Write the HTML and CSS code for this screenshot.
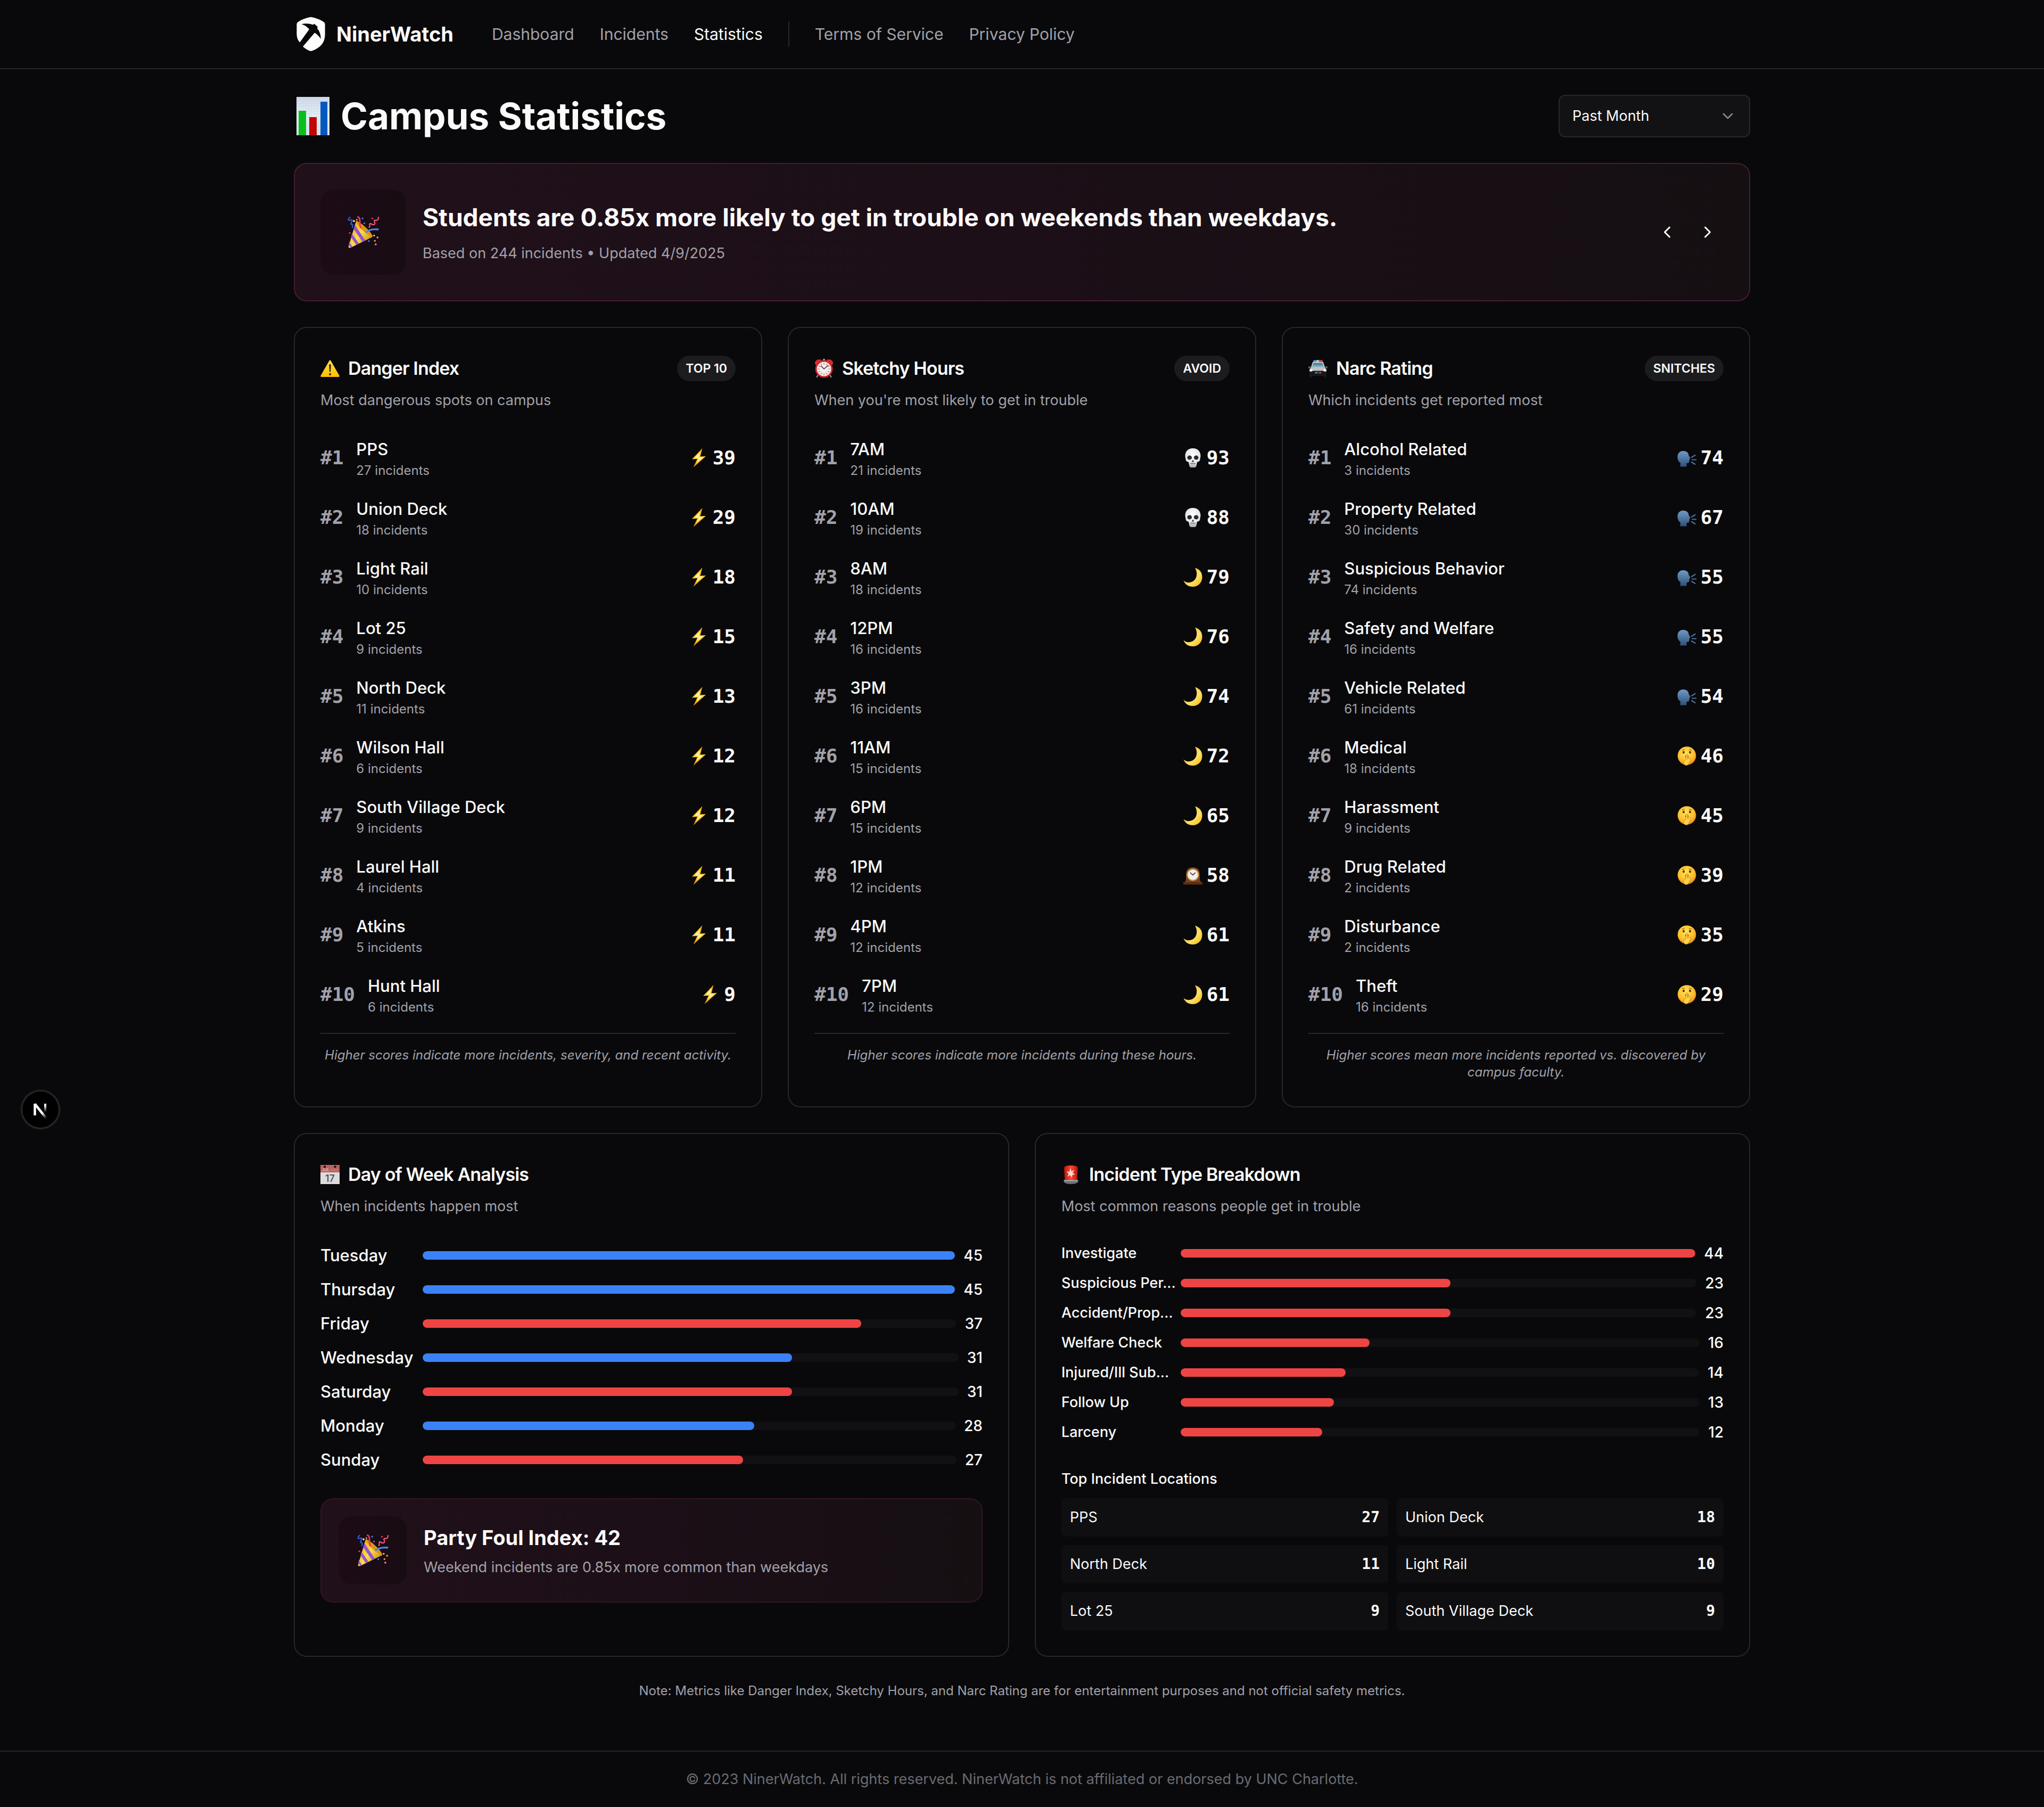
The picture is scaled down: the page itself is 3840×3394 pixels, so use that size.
FILE: index.html
```html
<!DOCTYPE html>
<html lang="en">
<head>
<meta charset="utf-8">
<meta name="viewport" content="width=device-width, initial-scale=1">
<title>Campus Statistics | NinerWatch</title>
<link rel="stylesheet" href="styles.css">
</head>
<body>
<svg class="sprite" aria-hidden="true">
  <defs>
    <linearGradient id="g-bolt" x1="0" y1="0" x2="0" y2="1"><stop offset="0" stop-color="#f7a400"/><stop offset=".5" stop-color="#ffd21f"/><stop offset="1" stop-color="#f08c00"/></linearGradient>
    <linearGradient id="g-warn" x1="0" y1="0" x2="0" y2="1"><stop offset="0" stop-color="#ffe04a"/><stop offset="1" stop-color="#fcc000"/></linearGradient>
    <linearGradient id="g-cone" x1="0" y1="0" x2="1" y2=".7"><stop offset="0" stop-color="#d99a1c"/><stop offset=".55" stop-color="#fbe04a"/><stop offset="1" stop-color="#c98a12"/></linearGradient>
    <linearGradient id="g-moon" x1="0" y1="0" x2="1" y2="1"><stop offset="0" stop-color="#f3b61f"/><stop offset=".6" stop-color="#ffe067"/><stop offset="1" stop-color="#f2b705"/></linearGradient>
    <linearGradient id="g-talk" x1="0" y1="0" x2="0" y2="1"><stop offset="0" stop-color="#6f9ac6"/><stop offset="1" stop-color="#2f5079"/></linearGradient>
    <radialGradient id="g-face" cx=".45" cy=".35" r=".65"><stop offset="0" stop-color="#ffe65c"/><stop offset=".7" stop-color="#fdbb2a"/><stop offset="1" stop-color="#e88a12"/></radialGradient>
    <radialGradient id="g-skull" cx=".5" cy=".35" r=".7"><stop offset="0" stop-color="#ffffff"/><stop offset=".7" stop-color="#dfe3e6"/><stop offset="1" stop-color="#9ba1a6"/></radialGradient>
    <linearGradient id="g-siren" x1="0" y1="0" x2="1" y2="0"><stop offset="0" stop-color="#b3170c"/><stop offset=".5" stop-color="#ff4b34"/><stop offset="1" stop-color="#a8140a"/></linearGradient>
    <linearGradient id="g-glass" x1="0" y1="0" x2="0" y2="1"><stop offset="0" stop-color="#3f6f85"/><stop offset="1" stop-color="#9fd3e0"/></linearGradient>
    <linearGradient id="g-paper" x1="0" y1="0" x2="0" y2="1"><stop offset="0" stop-color="#d5dbe4"/><stop offset=".5" stop-color="#f4f7fa"/><stop offset="1" stop-color="#dfe5ec"/></linearGradient>
    <linearGradient id="g-next" x1="0" y1="0" x2="0" y2="1"><stop offset=".2" stop-color="#fff"/><stop offset="1" stop-color="#fff" stop-opacity="0"/></linearGradient>
    <linearGradient id="g-next-leg" gradientUnits="userSpaceOnUse" x1="20" y1="22" x2="31" y2="36"><stop offset=".3" stop-color="#fff"/><stop offset="1" stop-color="#fff" stop-opacity="0"/></linearGradient>
    <pattern id="p-grid" width="3" height="3" patternUnits="userSpaceOnUse"><path d="M0 0H3M0 0V3" stroke="#b8cfe6" stroke-width="1"/></pattern>
  </defs>

  <symbol id="i-chart" viewBox="0 0 72 72">
    <rect x="5" width="62" height="72" fill="url(#g-paper)"/>
    <rect x="5" width="62" height="72" fill="url(#p-grid)"/>
    <rect x="9" y="26" width="14" height="46" fill="#08c01c"/>
    <rect x="29" y="38" width="14" height="34" fill="#c00606"/>
    <rect x="50" y="9" width="13" height="63" fill="#0459c0"/>
  </symbol>
  <symbol id="i-party" viewBox="0 0 36 36">
    <path d="M10.3 5.2C14 6 27.500 17 29 23.200L4 35.500C2.500 36.200 1.400 35.500 1.700 34Z" fill="url(#g-cone)"/>
    <path d="M10.300 5.200C15 6.500 28 18.500 28.900 23.300C24.500 23.400 9.500 9.500 10.300 5.200Z" fill="#e0930f"/>
    <path d="M7.600 14.500L17.200 28.800L20.500 27.200L8.700 9.700ZM4.500 23.500L10.200 32.200L13.300 30.700L5.500 19.500ZM1.900 31.800L4 35.500L6 34.500L2.500 28.600Z" fill="#9a52d0"/>
    <path d="M3.600 .8C.2 4.500 1 5.500 5 4C7.500 4.500 3.500 7.500 4.500 9.200C7.800 8.500 5.500 12 6 13.500" fill="none" stroke="#2f62d9" stroke-width="1.300"/>
    <path d="M11.500 .8C16 1 13.500 8 15.500 13.500" fill="none" stroke="#f0335c" stroke-width="1.700"/>
    <path d="M35.200 .8C35.800 3.500 34 5.500 31.200 4.500C29.500 6 33 8 30.500 9.500C28 10.500 27 7.500 25.800 8.500C24.500 9.500 27 11.500 24.500 13" fill="none" stroke="#f2587b" stroke-width="1.300"/>
    <path d="M20.800 18.500C25 14.800 30 14.300 35.500 15" fill="none" stroke="#4c86f5" stroke-width="2"/>
    <circle cx="7.800" cy="5.500" r="1.100" fill="#ffe14a"/><circle cx="17.500" cy="2.500" r="1" fill="#3c7af0"/><circle cx="19.500" cy="8" r="1" fill="#3c7af0"/><circle cx="28.500" cy="2.500" r="1" fill="#f0335c"/><circle cx="11" cy="4" r=".9" fill="#ff9cb4"/><circle cx="3" cy="19" r="1" fill="#f0335c"/><circle cx="30.500" cy="21.800" r="1" fill="#ffd23a"/><circle cx="34.300" cy="24" r="1.100" fill="#f7a32a"/><circle cx="24.500" cy="28" r="1" fill="#3c7af0"/><circle cx="31.400" cy="27.800" r="1" fill="#f7a32a"/><circle cx="32.300" cy="31.800" r="1.100" fill="#ff86b8"/>
  </symbol>
  <symbol id="i-warning" viewBox="0 0 36 36">
    <path d="M16.600 3.500Q18 1.300 19.400 3.500L35.500 31.500Q36.500 34 34 34H2Q-.5 34 .5 31.500Z" fill="url(#g-warn)"/>
    <path d="M16.200 11Q18 9 19.800 11L19 24.500H17Z" fill="#2b2200"/><circle cx="18" cy="29" r="2" fill="#2b2200"/>
  </symbol>
  <symbol id="i-alarm" viewBox="0 0 36 36">
    <path d="M7 30L4 35M29 30L32 35" stroke="#8c8f94" stroke-width="2.400"/>
    <path d="M1 9Q1 1 10 1L14 3L3 12ZM35 9Q35 1 26 1L22 3L33 12Z" fill="#d92a31"/>
    <rect x="16" y="0" width="4" height="3" rx="1" fill="#9a9da2"/>
    <circle cx="18" cy="19" r="16.500" fill="#c9252c"/><circle cx="18" cy="19" r="13.500" fill="#f1efec"/>
    <g stroke="#e0555a" stroke-width="1.200"><path d="M18 7V11M18 27V31M6 19H10M26 19H30M12 8.600L14 12M24 8.600L22 12M12 29.400L14 26M24 29.400L22 26M7.600 13L11 15M28.400 13L25 15M7.600 25L11 23M28.400 25L25 23"/></g>
    <path d="M12 13L18 19L26 12" fill="none" stroke="#333" stroke-width="1.600"/>
  </symbol>
  <symbol id="i-police" viewBox="0 0 36 36">
    <path d="M9 4Q9 2.500 11 2.500H25Q27 2.500 27 4V6H9Z" fill="#25b5ef"/><path d="M18 2.500H25Q27 2.500 27 4V6H18Z" fill="#ef3b3b"/><rect x="15.500" y="2.500" width="4" height="3.500" fill="#e9c9dc"/>
    <path d="M8 6H28L31.500 17L34 20V30H2V20L4.500 17Z" fill="#bfc3c6"/>
    <path d="M9.500 8H26.500L29.500 17H6.500Z" fill="url(#g-glass)"/>
    <rect x="0" y="14" width="4.500" height="4" rx="1.500" fill="#5b5f63"/><rect x="31.500" y="14" width="4.500" height="4" rx="1.500" fill="#5b5f63"/>
    <path d="M2 24L9 22.500H27L34 24V33Q34 34.500 32 34.500H29V32H7V34.500H4Q2 34.500 2 33Z" fill="#17191b"/>
    <circle cx="5.500" cy="21.500" r="2.200" fill="#fff"/><circle cx="30.500" cy="21.500" r="2.200" fill="#fff"/>
    <rect x="12" y="24" width="12" height="4" fill="#3b4045"/><rect x="13" y="25" width="3" height="2" fill="#29a8f0"/><rect x="21" y="25" width="3" height="2" fill="#ef3b3b"/>
  </symbol>
  <symbol id="i-bolt" viewBox="0 0 36 36">
    <path d="M24.500 0L5 20.500L15 20L7.500 36L31 15L20.500 15.500Z" fill="url(#g-bolt)"/><path d="M21 6L10 18.500L18 18L13 28L26 16.600L17.500 17Z" fill="#fff3b0"/>
  </symbol>
  <symbol id="i-skull" viewBox="0 0 36 36">
    <path d="M18 0C9 0 3.500 6 3.500 14C3.500 17 4.500 18.500 4.500 20.500C4.500 24 6.500 25 10 26L11.500 33Q12 36 15 36H21Q24 36 24.500 33L26 26C29.500 25 31.500 24 31.500 20.500C31.500 18.500 32.500 17 32.500 14C32.500 6 27 0 18 0Z" fill="url(#g-skull)"/>
    <ellipse cx="11.800" cy="17.500" rx="4.300" ry="4" fill="#2a2a2c"/><ellipse cx="24.200" cy="17.500" rx="4.300" ry="4" fill="#2a2a2c"/>
    <path d="M18 21.500L15.800 25.500H20.200Z" fill="#2a2a2c"/><path d="M13 28.500H23" stroke="#5a5d60" stroke-width="1.400"/><path d="M15 28V33.500M18 28V34M21 28V33.500" stroke="#8b8f93" stroke-width=".9"/>
  </symbol>
  <symbol id="i-moon" viewBox="0 0 36 36">
    <path d="M22 .5C31 3 36 10 35.500 19C35 29 27.500 36 18 36C9.500 36 3 31.500 .5 24.500C5 28.500 12 29.500 18 26C26 21.500 27.500 10 22 .5Z" fill="url(#g-moon)"/>
  </symbol>
  <symbol id="i-clock" viewBox="0 0 36 36">
    <path d="M3 35V30Q5 29 5 24V17Q5 3 18 3Q31 3 31 17V24Q31 29 33 30V35Z" fill="#7a3f22"/><path d="M0 31H36V35.500H0Z" fill="#5b2c17"/>
    <circle cx="18" cy="17" r="11.500" fill="#c99a55"/><circle cx="18" cy="17" r="9.500" fill="#f3efe6"/><path d="M13 13L18 17.500L23 13" fill="none" stroke="#2c2c2c" stroke-width="1.600"/>
  </symbol>
  <symbol id="i-talk" viewBox="0 0 36 36">
    <path d="M11 5C18 5 21.500 9 21.500 13.500L24.500 18.500Q25 20 23 20.300L22.500 25Q22 28.500 17.500 28V34.500H5.500L6 27.500C2 25 .5 20.500 .5 16C.5 9 5 5 11 5Z" fill="url(#g-talk)"/>
    <path d="M27 17L33.500 13M28 21.500H35.500M27 26L33.500 30" stroke="#4a719c" stroke-width="2.200" stroke-linecap="round"/>
  </symbol>
  <symbol id="i-hush" viewBox="0 0 36 36">
    <circle cx="18" cy="17.500" r="17.300" fill="url(#g-face)"/>
    <path d="M9 7.500Q11.500 5 14 7M22 7Q24.500 5 27 7.500" fill="none" stroke="#a3620c" stroke-width="1.300"/>
    <ellipse cx="12" cy="11" rx="1.900" ry="2.500" fill="#5a2f07"/><ellipse cx="24" cy="11" rx="1.900" ry="2.500" fill="#5a2f07"/>
    <ellipse cx="18" cy="19" rx="3.300" ry="2" fill="#8a4d0b"/>
    <path d="M16.500 15.500Q18 13.500 19.300 15.500L19.500 24L24 21.500Q26.500 22 25 25L21.500 33Q19 36.500 14.500 35Q11.500 33.500 12 29.500Q12.500 26 16.200 25Z" fill="#ffd34d" stroke="#d98a14" stroke-width="1"/>
  </symbol>
  <symbol id="i-siren" viewBox="0 0 36 36">
    <path d="M6.500 29L5 6Q5 1 18 1Q31 1 31 6L29.500 29Z" fill="url(#g-siren)"/>
    <path d="M5 28H31Q32.500 31 30 33.500Q26 36 18 36Q10 36 6 33.500Q3.500 31 5 28Z" fill="#6e7073"/><path d="M5.500 28.500H30.500V30.500H5.500Z" fill="#a9acaf"/>
    <path d="M17 6L19 12.500L24.500 9L21 15L26 18L20.500 18.500L19.500 24L16.500 19L11.500 22L13.500 16.500L9.500 12.500L15 13Z" fill="#ffd9d2"/>
  </symbol>
</svg>

<header class="site-header">
  <div class="container header-inner">
    <a class="brand" href="#">
      <svg class="brand-mark" viewBox="0 0 64 64" aria-hidden="true">
        <path d="M32 0C43 2 52 6 57 10Q58.600 11.500 58.600 14V32C58.600 44 54 51 48 56C42 60.500 37 63 32 64C27 63 22 60 17 55.500L5.400 40V14Q5.400 11.500 7 10C12 6 21 2 32 0Z" fill="#fdfdfb"/>
        <path d="M14.400 13.500C22 11.500 29 12.200 35.500 14.500L38.700 13L44.700 18.200L44 21.500C48 26 50.800 33 50.700 41C47.500 36 43.500 32.500 39.200 29.500L17 55.500L9 60L4 49L10.900 48L29 23C25.500 19 20.500 15 14.400 13.500Z" fill="#09090b"/>
        <path d="M5.400 32Q5.500 41 10.900 48L4 49Z" fill="#09090b"/>
      </svg>
      <span>NinerWatch</span>
    </a>
    <nav class="nav" aria-label="Main">
      <a href="#">Dashboard</a>
      <a href="#">Incidents</a>
      <a href="#" class="active" aria-current="page">Statistics</a>
      <span class="nav-divider"></span>
      <a href="#">Terms of Service</a>
      <a href="#">Privacy Policy</a>
    </nav>
  </div>
</header>

<main class="container main">
  <div class="page-head">
    <h1><svg class="h1-icon" aria-hidden="true"><use href="#i-chart"/></svg>Campus Statistics</h1>
    <div class="select">
      <select aria-label="Time range"><option>Past Month</option><option>Past Week</option><option>Past Year</option></select>
      <svg viewBox="0 0 24 24" aria-hidden="true"><path d="m6 9 6 6 6-6"/></svg>
    </div>
  </div>

  <section class="banner">
    <div class="banner-icon"><svg aria-hidden="true"><use href="#i-party"/></svg></div>
    <div class="banner-text">
      <h2>Students are 0.85x more likely to get in trouble on weekends than weekdays.</h2>
      <p>Based on 244 incidents • Updated 4/9/2025</p>
    </div>
    <div class="banner-nav">
      <button type="button" aria-label="Previous"><svg viewBox="0 0 24 24"><path d="m15 18-6-6 6-6"/></svg></button>
      <button type="button" aria-label="Next"><svg viewBox="0 0 24 24"><path d="m9 18 6-6-6-6"/></svg></button>
    </div>
  </section>

  <div class="grid-3">
    <section class="card">
      <header class="card-head">
        <div class="card-title-row"><h3><svg class="icon"><use href="#i-warning"/></svg>Danger Index</h3><span class="badge">TOP 10</span></div>
        <p>Most dangerous spots on campus</p>
      </header>
      <ol class="ranks">
        <li><span class="rank">#1</span><div class="item"><b>PPS</b><small>27 incidents</small></div><span class="score"><svg class="icon"><use href="#i-bolt"/></svg>39</span></li>
        <li><span class="rank">#2</span><div class="item"><b>Union Deck</b><small>18 incidents</small></div><span class="score"><svg class="icon"><use href="#i-bolt"/></svg>29</span></li>
        <li><span class="rank">#3</span><div class="item"><b>Light Rail</b><small>10 incidents</small></div><span class="score"><svg class="icon"><use href="#i-bolt"/></svg>18</span></li>
        <li><span class="rank">#4</span><div class="item"><b>Lot 25</b><small>9 incidents</small></div><span class="score"><svg class="icon"><use href="#i-bolt"/></svg>15</span></li>
        <li><span class="rank">#5</span><div class="item"><b>North Deck</b><small>11 incidents</small></div><span class="score"><svg class="icon"><use href="#i-bolt"/></svg>13</span></li>
        <li><span class="rank">#6</span><div class="item"><b>Wilson Hall</b><small>6 incidents</small></div><span class="score"><svg class="icon"><use href="#i-bolt"/></svg>12</span></li>
        <li><span class="rank">#7</span><div class="item"><b>South Village Deck</b><small>9 incidents</small></div><span class="score"><svg class="icon"><use href="#i-bolt"/></svg>12</span></li>
        <li><span class="rank">#8</span><div class="item"><b>Laurel Hall</b><small>4 incidents</small></div><span class="score"><svg class="icon"><use href="#i-bolt"/></svg>11</span></li>
        <li><span class="rank">#9</span><div class="item"><b>Atkins</b><small>5 incidents</small></div><span class="score"><svg class="icon"><use href="#i-bolt"/></svg>11</span></li>
        <li><span class="rank">#10</span><div class="item"><b>Hunt Hall</b><small>6 incidents</small></div><span class="score"><svg class="icon"><use href="#i-bolt"/></svg>9</span></li>
      </ol>
      <p class="card-note">Higher scores indicate more incidents, severity, and recent activity.</p>
    </section>

    <section class="card">
      <header class="card-head">
        <div class="card-title-row"><h3><svg class="icon"><use href="#i-alarm"/></svg>Sketchy Hours</h3><span class="badge">AVOID</span></div>
        <p>When you're most likely to get in trouble</p>
      </header>
      <ol class="ranks">
        <li><span class="rank">#1</span><div class="item"><b>7AM</b><small>21 incidents</small></div><span class="score"><svg class="icon"><use href="#i-skull"/></svg>93</span></li>
        <li><span class="rank">#2</span><div class="item"><b>10AM</b><small>19 incidents</small></div><span class="score"><svg class="icon"><use href="#i-skull"/></svg>88</span></li>
        <li><span class="rank">#3</span><div class="item"><b>8AM</b><small>18 incidents</small></div><span class="score"><svg class="icon"><use href="#i-moon"/></svg>79</span></li>
        <li><span class="rank">#4</span><div class="item"><b>12PM</b><small>16 incidents</small></div><span class="score"><svg class="icon"><use href="#i-moon"/></svg>76</span></li>
        <li><span class="rank">#5</span><div class="item"><b>3PM</b><small>16 incidents</small></div><span class="score"><svg class="icon"><use href="#i-moon"/></svg>74</span></li>
        <li><span class="rank">#6</span><div class="item"><b>11AM</b><small>15 incidents</small></div><span class="score"><svg class="icon"><use href="#i-moon"/></svg>72</span></li>
        <li><span class="rank">#7</span><div class="item"><b>6PM</b><small>15 incidents</small></div><span class="score"><svg class="icon"><use href="#i-moon"/></svg>65</span></li>
        <li><span class="rank">#8</span><div class="item"><b>1PM</b><small>12 incidents</small></div><span class="score"><svg class="icon"><use href="#i-clock"/></svg>58</span></li>
        <li><span class="rank">#9</span><div class="item"><b>4PM</b><small>12 incidents</small></div><span class="score"><svg class="icon"><use href="#i-moon"/></svg>61</span></li>
        <li><span class="rank">#10</span><div class="item"><b>7PM</b><small>12 incidents</small></div><span class="score"><svg class="icon"><use href="#i-moon"/></svg>61</span></li>
      </ol>
      <p class="card-note">Higher scores indicate more incidents during these hours.</p>
    </section>

    <section class="card">
      <header class="card-head">
        <div class="card-title-row"><h3><svg class="icon"><use href="#i-police"/></svg>Narc Rating</h3><span class="badge">SNITCHES</span></div>
        <p>Which incidents get reported most</p>
      </header>
      <ol class="ranks">
        <li><span class="rank">#1</span><div class="item"><b>Alcohol Related</b><small>3 incidents</small></div><span class="score"><svg class="icon"><use href="#i-talk"/></svg>74</span></li>
        <li><span class="rank">#2</span><div class="item"><b>Property Related</b><small>30 incidents</small></div><span class="score"><svg class="icon"><use href="#i-talk"/></svg>67</span></li>
        <li><span class="rank">#3</span><div class="item"><b>Suspicious Behavior</b><small>74 incidents</small></div><span class="score"><svg class="icon"><use href="#i-talk"/></svg>55</span></li>
        <li><span class="rank">#4</span><div class="item"><b>Safety and Welfare</b><small>16 incidents</small></div><span class="score"><svg class="icon"><use href="#i-talk"/></svg>55</span></li>
        <li><span class="rank">#5</span><div class="item"><b>Vehicle Related</b><small>61 incidents</small></div><span class="score"><svg class="icon"><use href="#i-talk"/></svg>54</span></li>
        <li><span class="rank">#6</span><div class="item"><b>Medical</b><small>18 incidents</small></div><span class="score"><svg class="icon"><use href="#i-hush"/></svg>46</span></li>
        <li><span class="rank">#7</span><div class="item"><b>Harassment</b><small>9 incidents</small></div><span class="score"><svg class="icon"><use href="#i-hush"/></svg>45</span></li>
        <li><span class="rank">#8</span><div class="item"><b>Drug Related</b><small>2 incidents</small></div><span class="score"><svg class="icon"><use href="#i-hush"/></svg>39</span></li>
        <li><span class="rank">#9</span><div class="item"><b>Disturbance</b><small>2 incidents</small></div><span class="score"><svg class="icon"><use href="#i-hush"/></svg>35</span></li>
        <li><span class="rank">#10</span><div class="item"><b>Theft</b><small>16 incidents</small></div><span class="score"><svg class="icon"><use href="#i-hush"/></svg>29</span></li>
      </ol>
      <p class="card-note">Higher scores mean more incidents reported vs. discovered by campus faculty.</p>
    </section>
  </div>

  <div class="grid-2">
    <section class="card">
      <header class="card-head">
        <div class="card-title-row">
          <h3>
            <svg class="icon" viewBox="0 0 36 36" aria-hidden="true">
              <rect width="36" height="36" fill="#dcdcdd"/><rect width="36" height="14" fill="#b9605f"/>
              <circle cx="8" cy="3.500" r="2.200" fill="#241313"/><circle cx="27.500" cy="3.500" r="2.200" fill="#241313"/>
              <path d="M20 12V7M23 12V7M26 12V7M29 12V7M32 12V7" stroke="#d08a88" stroke-width="1"/>
              <text x="2" y="12" class="cal-month">JUL</text>
              <text x="18" y="32" class="cal-day">17</text>
            </svg>
            Day of Week Analysis
          </h3>
        </div>
        <p>When incidents happen most</p>
      </header>
      <ul class="bars days">
        <li><span class="label">Tuesday</span><div class="track"><div class="fill blue" style="width:100%"></div></div><span class="count">45</span></li>
        <li><span class="label">Thursday</span><div class="track"><div class="fill blue" style="width:100%"></div></div><span class="count">45</span></li>
        <li><span class="label">Friday</span><div class="track"><div class="fill" style="width:82.2%"></div></div><span class="count">37</span></li>
        <li><span class="label">Wednesday</span><div class="track"><div class="fill blue" style="width:68.9%"></div></div><span class="count">31</span></li>
        <li><span class="label">Saturday</span><div class="track"><div class="fill" style="width:68.9%"></div></div><span class="count">31</span></li>
        <li><span class="label">Monday</span><div class="track"><div class="fill blue" style="width:62.2%"></div></div><span class="count">28</span></li>
        <li><span class="label">Sunday</span><div class="track"><div class="fill" style="width:60%"></div></div><span class="count">27</span></li>
      </ul>
      <div class="foul">
        <div class="foul-icon"><svg aria-hidden="true"><use href="#i-party"/></svg></div>
        <div>
          <h4>Party Foul Index: 42</h4>
          <p>Weekend incidents are 0.85x more common than weekdays</p>
        </div>
      </div>
    </section>

    <section class="card">
      <header class="card-head">
        <div class="card-title-row"><h3><svg class="icon"><use href="#i-siren"/></svg>Incident Type Breakdown</h3></div>
        <p>Most common reasons people get in trouble</p>
      </header>
      <ul class="bars types">
        <li><span class="label">Investigate</span><div class="track"><div class="fill" style="width:100%"></div></div><span class="count">44</span></li>
        <li><span class="label">Suspicious Per...</span><div class="track"><div class="fill" style="width:52.3%"></div></div><span class="count">23</span></li>
        <li><span class="label">Accident/Prop...</span><div class="track"><div class="fill" style="width:52.3%"></div></div><span class="count">23</span></li>
        <li><span class="label">Welfare Check</span><div class="track"><div class="fill" style="width:36.4%"></div></div><span class="count">16</span></li>
        <li><span class="label">Injured/Ill Sub...</span><div class="track"><div class="fill" style="width:31.8%"></div></div><span class="count">14</span></li>
        <li><span class="label">Follow Up</span><div class="track"><div class="fill" style="width:29.5%"></div></div><span class="count">13</span></li>
        <li><span class="label">Larceny</span><div class="track"><div class="fill" style="width:27.3%"></div></div><span class="count">12</span></li>
      </ul>
      <h4 class="sub-title">Top Incident Locations</h4>
      <ul class="places">
        <li><span>PPS</span><b>27</b></li>
        <li><span>Union Deck</span><b>18</b></li>
        <li><span>North Deck</span><b>11</b></li>
        <li><span>Light Rail</span><b>10</b></li>
        <li><span>Lot 25</span><b>9</b></li>
        <li><span>South Village Deck</span><b>9</b></li>
      </ul>
    </section>
  </div>

  <p class="disclaimer">Note: Metrics like Danger Index, Sketchy Hours, and Narc Rating are for entertainment purposes and not official safety metrics.</p>
</main>

<footer class="site-footer">
  <p>© 2023 NinerWatch. All rights reserved. NinerWatch is not affiliated or endorsed by UNC Charlotte.</p>
</footer>

<button class="dev-badge" type="button" aria-label="Open developer tools">
  <svg viewBox="0 0 40 40" aria-hidden="true">
    <path d="M9.500 31V9" stroke="#fff" stroke-width="4.500"/>
    <path d="M9.500 9.500L30.500 36" stroke="url(#g-next-leg)" stroke-width="4.500"/>
    <rect x="27" y="9" width="4" height="16" fill="url(#g-next)"/>
  </svg>
</button>
</body>
</html>
```
FILE: styles.css
```css
:root {
  --bg: #09090b;
  --fg: #fafafa;
  --muted: #a1a1aa;
  --border: #27272a;
  --track: #111113;
  --mono: "DejaVu Sans Mono", "Liberation Mono", monospace;
}

* { box-sizing: border-box; margin: 0; padding: 0; }

body {
  position: relative;
  background: var(--bg);
  color: var(--fg);
  font: 400 27px/40px Inter, "Liberation Sans", sans-serif;
}

ol, ul { list-style: none; }
a { color: inherit; text-decoration: none; }
svg { display: block; flex: none; }
.sprite { position: absolute; width: 0; height: 0; }

.cal-month { font: 600 8px Inter, sans-serif; fill: #e3b4b3; letter-spacing: 0; }
.cal-day { font: 500 18px Inter, sans-serif; fill: #4a4a4c; text-anchor: middle; letter-spacing: 0; }

.container {
  max-width: 2800px;
  margin: 0 auto;
  padding: 0 32px;
}

/* Header */
.site-header { border-bottom: 2px solid var(--border); }
.header-inner {
  display: flex;
  align-items: center;
  gap: 72px;
  height: 128px;
}
.brand {
  display: flex;
  align-items: center;
  gap: 16px;
  font-size: 38px;
  line-height: 56px;
  font-weight: 700;
}
.brand-mark { width: 64px; height: 64px; }
.nav {
  display: flex;
  align-items: center;
  gap: 48px;
  font-size: 30px;
  line-height: 48px;
  color: var(--muted);
}
.nav .active { color: var(--fg); }
.nav-divider { width: 2px; height: 48px; background: var(--border); }

/* Page heading */
.main {
  display: flex;
  flex-direction: column;
  gap: 48px;
  padding-top: 48px;
  padding-bottom: 96px;
}
.page-head {
  display: flex;
  align-items: center;
  justify-content: space-between;
}
h1 {
  display: flex;
  align-items: center;
  gap: 16px;
  font-size: 69px;
  line-height: 80px;
  font-weight: 700;
}
.h1-icon { width: 72px; height: 72px; }
.select { display: grid; width: 360px; }
.select > * { grid-area: 1 / 1; }
.select select {
  appearance: none;
  height: 80px;
  padding: 0 24px;
  border: 2px solid var(--border);
  border-radius: 12px;
  background: #121214;
  color: var(--fg);
  font: inherit;
}
.select svg {
  width: 32px;
  height: 32px;
  margin-right: 26px;
  place-self: center end;
  opacity: .5;
  pointer-events: none;
}
.select path, .banner-nav path {
  fill: none;
  stroke: currentColor;
  stroke-width: 2;
  stroke-linecap: round;
  stroke-linejoin: round;
}

/* Insight banner */
.banner {
  display: flex;
  align-items: center;
  gap: 32px;
  padding: 48px;
  border: 2px solid #4a1a35;
  border-radius: 24px;
  background: linear-gradient(90deg, #20101a, #1c0f17 50%, #150f12);
}
.banner-icon, .foul-icon {
  display: grid;
  place-items: center;
  flex: none;
  border-radius: 24px;
  background: linear-gradient(90deg, #1c0b15, #180c13);
}
.banner-icon { width: 160px; height: 160px; }
.banner-icon svg, .foul-icon svg { width: 60px; height: 60px; }
.banner-text { flex: 1; }
.banner-text h2 { font-size: 46px; line-height: 64px; font-weight: 700; }
.banner-text p { margin-top: 16px; color: var(--muted); }
.banner-nav { display: flex; gap: 16px; }
.banner-nav button {
  display: grid;
  place-items: center;
  width: 60px;
  height: 60px;
  border: 0;
  border-radius: 12px;
  background: none;
  color: #fff;
}
.banner-nav svg { width: 36px; height: 36px; }

/* Cards */
.grid-3 { display: grid; grid-template-columns: repeat(3, 1fr); gap: 48px; }
.grid-2 { display: grid; grid-template-columns: repeat(2, 1fr); gap: 48px; }
.card {
  min-width: 0;
  padding: 48px;
  border: 2px solid var(--border);
  border-radius: 24px;
}
.card-head { margin-bottom: 48px; }
.card-title-row {
  display: flex;
  align-items: center;
  justify-content: space-between;
}
.card-head h3 {
  display: flex;
  align-items: center;
  gap: 16px;
  font-size: 34px;
  line-height: 56px;
  font-weight: 600;
  letter-spacing: -0.025em;
}
.card-head p { margin-top: 12px; color: var(--muted); }
.icon { width: 36px; height: 36px; }
.badge {
  padding: 8px 16px;
  border-radius: 24px;
  background: #1c1c1e;
  font-size: 23px;
  line-height: 32px;
  font-weight: 600;
}

.ranks { display: grid; gap: 32px; }
.ranks li { display: flex; align-items: center; gap: 24px; }
.rank, .score { font: 700 36px/56px var(--mono); }
.rank { color: var(--muted); }
.item { flex: 1; }
.item b { display: block; font-size: 31px; line-height: 48px; font-weight: 500; }
.item small { display: block; font-size: 24px; line-height: 32px; color: var(--muted); }
.score { display: flex; align-items: center; gap: 8px; }
.card-note {
  margin-top: 32px;
  padding-top: 24px;
  border-top: 2px solid var(--border);
  color: var(--muted);
  font-size: 24px;
  line-height: 32px;
  font-style: italic;
  text-align: center;
}

/* Bar lists */
.bars { display: grid; gap: 16px; font-weight: 500; }
.bars li { display: flex; align-items: center; }
.bars .label { flex: none; white-space: nowrap; }
.days .label { width: 192px; font-size: 31px; line-height: 48px; }
.types .label { width: 224px; }
.track {
  flex: 1;
  height: 16px;
  border-radius: 8px;
  background: var(--track);
  overflow: hidden;
}
.fill { height: 100%; border-radius: 8px; background: #ef4444; }
.fill.blue { background: #3b82f6; }
.count { margin-left: 16px; font-size: 28px; }

.foul {
  display: flex;
  align-items: center;
  gap: 32px;
  margin-top: 48px;
  padding: 32px;
  border: 2px solid #341522;
  border-radius: 24px;
  background: linear-gradient(90deg, #20101a, #1c0f17 50%, #150f12);
}
.foul-icon { width: 128px; height: 128px; }
.foul h4 { font-size: 38px; line-height: 56px; font-weight: 700; }
.foul p { margin-top: 8px; color: var(--muted); }

.sub-title { margin: 48px 0 16px; font-size: 27px; font-weight: 500; }
.places { display: grid; grid-template-columns: repeat(2, 1fr); gap: 16px; }
.places li {
  display: flex;
  justify-content: space-between;
  padding: 16px;
  border-radius: 8px;
  background: #0f0f11;
}
.places b { font-family: var(--mono); font-size: 28px; }

.disclaimer {
  color: var(--muted);
  font-size: 24px;
  line-height: 32px;
  text-align: center;
}

.site-footer {
  padding: 32px;
  border-top: 2px solid var(--border);
  color: #6b6b72;
  text-align: center;
}

/* Floating developer badge */
.dev-badge {
  position: absolute;
  top: 2048px;
  left: 40px;
  display: grid;
  place-items: center;
  width: 72px;
  height: 72px;
  border: 2px solid #2a2a2a;
  border-radius: 50%;
  background: #000;
  box-shadow: 0 0 0 2px #19191a;
}
.dev-badge svg { width: 40px; height: 40px; }
```
